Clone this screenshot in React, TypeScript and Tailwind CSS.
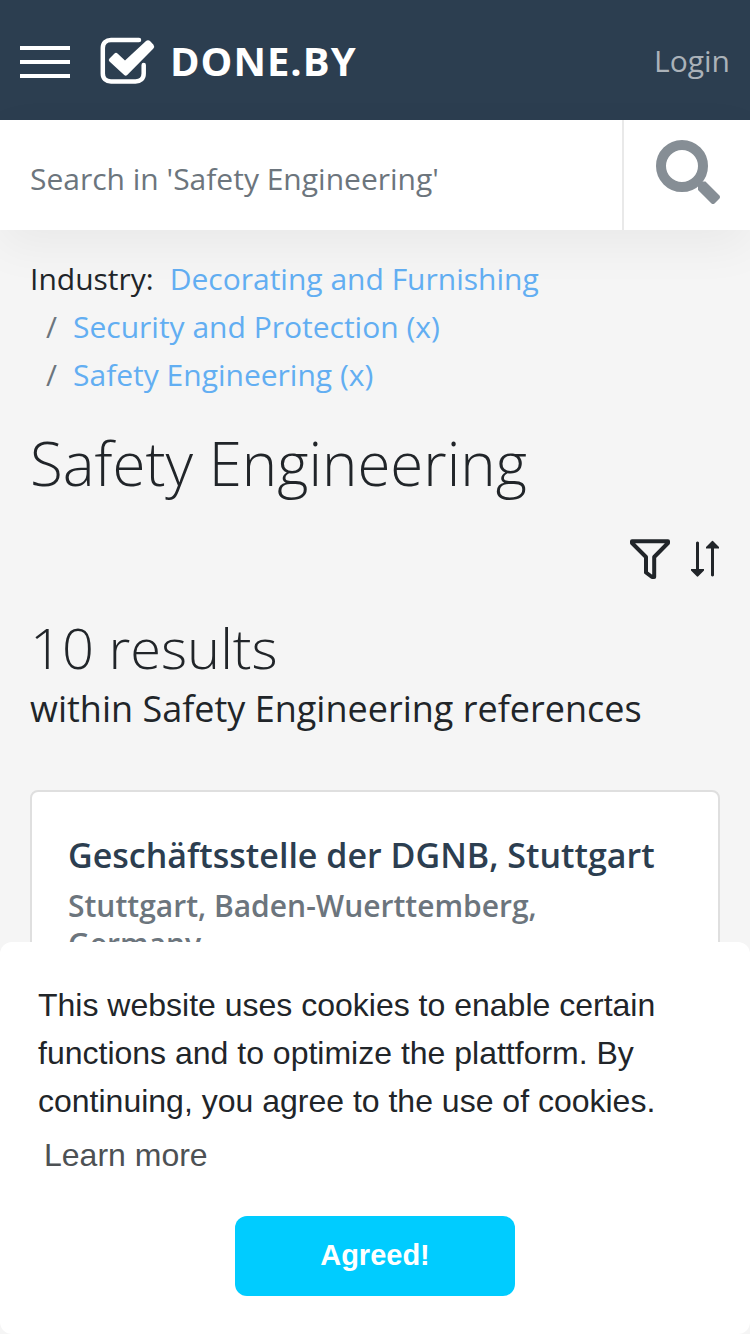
const links = "text-[#62aef2]";

function Logo() {
  return (
    <svg width="56" height="48" viewBox="0 0 56 48" fill="none" aria-hidden="true">
      <path
        d="M39 4H11C6 4 2.800 7 2.800 12V37.500C2.800 42.500 6 45.400 11 45.400H35.500C40.500 45.400 43.700 42.500 43.700 37.500V29"
        stroke="white"
        strokeWidth="4.500"
        strokeLinecap="round"
      />
      <path
        d="M9.500 22.500L14.500 17.500Q16 16 17.500 17.500L25 24.500L46 5Q48.300 3.500 50.500 5.500L53.500 8.700Q55 10.700 53.200 12.700L27.200 39Q25.700 40.500 24.200 39L9.500 25.500Q8 24 9.500 22.500Z"
        fill="white"
      />
    </svg>
  );
}

function SearchIcon() {
  return (
    <svg width="64" height="64" viewBox="0 0 64 64" fill="none" aria-hidden="true">
      <circle cx="26" cy="26" r="21" stroke="#868e95" strokeWidth="10" />
      <path
        d="M40 44L44 41.500H49.500L63.500 55.500Q64.500 57 63.500 58.500L58.500 63.500Q57 64.500 55.500 63.500L42 50V46Z"
        fill="#868e95"
      />
    </svg>
  );
}

function FunnelIcon() {
  return (
    <svg width="40" height="40" viewBox="0 0 40 40" fill="none" aria-hidden="true">
      <path
        d="M2 2.200H38V4L24.200 18V38H22L16 33.500V18L2 4Z"
        stroke="#212529"
        strokeWidth="4"
        strokeLinejoin="round"
      />
    </svg>
  );
}

function SortIcon() {
  return (
    <svg width="30" height="40" viewBox="0 0 30 40" aria-hidden="true">
      <path
        d="M6 3.500Q7.500 1.500 9 3.500V30H14V31.500L8.500 37Q7.500 38.500 6.500 37L1 31.500V30H6Z M21 36.500Q22.500 38.500 24 36.500V9.500H29V8L23.500 2.500Q22.500 1 21.500 2.500L16 8V9.500H21Z"
        fill="#212529"
      />
    </svg>
  );
}

export default function App() {
  return (
    <div className="h-screen overflow-hidden bg-[#f5f5f5] font-['Open_Sans','Noto_Sans',sans-serif] text-[#212529]">
      <header className="flex h-[120px] items-center bg-[#2c3e50] px-5">
        <button type="button" aria-label="Menu" className="flex w-[50px] flex-col gap-[10px] pt-1">
          <span className="h-1 w-full bg-white" />
          <span className="h-1 w-full bg-white" />
          <span className="h-1 w-full bg-white" />
        </button>
        <a href="#" className="ml-[30px] flex items-center gap-[14px] text-white">
          <Logo />
          <span className="pt-[2px] text-[40px] font-bold leading-[48px] tracking-wide">DONE.BY</span>
        </a>
        <a href="#" className="ml-auto pt-[2px] text-[30px] leading-[48px] text-[#abb2b9]">
          Login
        </a>
      </header>

      <form
        className="relative flex h-[110px] bg-white shadow-[0_16px_48px_rgba(0,0,0,0.05)]"
        onSubmit={(e) => e.preventDefault()}
      >
        <input
          type="search"
          aria-label="Search"
          placeholder="Search in 'Safety Engineering'"
          className="min-w-0 flex-1 pt-[6px] pr-4 pl-[30px] text-[30px] outline-none placeholder:text-[#6c757d]"
        />
        <button
          type="submit"
          aria-label="Submit search"
          className="flex w-32 justify-end border-l-2 border-[#e9e9e9] pt-5 pr-[30px]"
        >
          <SearchIcon />
        </button>
      </form>

      <main className="px-[30px] pt-[25px]">
        <nav aria-label="Industry" className="text-[30px] leading-[48px]">
          <ol>
            <li className="flex gap-4">
              <span>Industry:</span>
              <a href="#" className={links}>Decorating and Furnishing</a>
            </li>
            <li className="flex gap-4 pl-4">
              <span className="text-[#6c757d]">/</span>
              <a href="#" className={links}>Security and Protection (x)</a>
            </li>
            <li className="flex gap-4 pl-4">
              <span className="text-[#6c757d]">/</span>
              <a href="#" className={links}>Safety Engineering (x)</a>
            </li>
          </ol>
        </nav>

        <h1 className="mt-7 text-[60px] font-light leading-[72px]">Safety Engineering</h1>
        <div className="mt-10 flex justify-end gap-5">
          <button type="button" aria-label="Filter"><FunnelIcon /></button>
          <button type="button" aria-label="Sort"><SortIcon /></button>
        </div>
        <h2 className="mt-8 text-[56px] font-light leading-[72px]">10 results</h2>
        <p className="text-[36px] leading-[52px]">within Safety Engineering references</p>

        <article className="mt-[55px] h-96 rounded-lg border-2 border-[#dfdfdf] bg-white px-9 pt-[41px]">
          <h3 className="text-[34px] font-semibold leading-[44px] text-[#2c3e50]">
            Geschäftsstelle der DGNB, Stuttgart
          </h3>
          <p className="mt-[10px] pr-12 text-[30px] font-semibold leading-[38px] text-[#6c757d]">
            Stuttgart, Baden-Wuerttemberg, Germany
          </p>
        </article>
      </main>

      <section
        aria-label="Cookie notice"
        className="fixed inset-x-0 bottom-0 rounded-xl bg-white px-[38px] pt-[39px] pb-[38px] font-['Liberation_Sans',sans-serif]"
      >
        <p className="text-[32px] leading-[48px]">
          This website uses cookies to enable certain functions and to optimize the plattform. By
          continuing, you agree to the use of cookies.
        </p>
        <a href="#" className="mt-[6px] ml-[6px] block w-fit text-[32px] leading-[48px] text-[#4d5154]">
          Learn more
        </a>
        <button
          type="button"
          className="mx-auto mt-[37px] block h-20 w-[280px] rounded-xl bg-[#00ccff] text-[29px] font-bold text-white"
        >
          Agreed!
        </button>
      </section>
    </div>
  );
}
